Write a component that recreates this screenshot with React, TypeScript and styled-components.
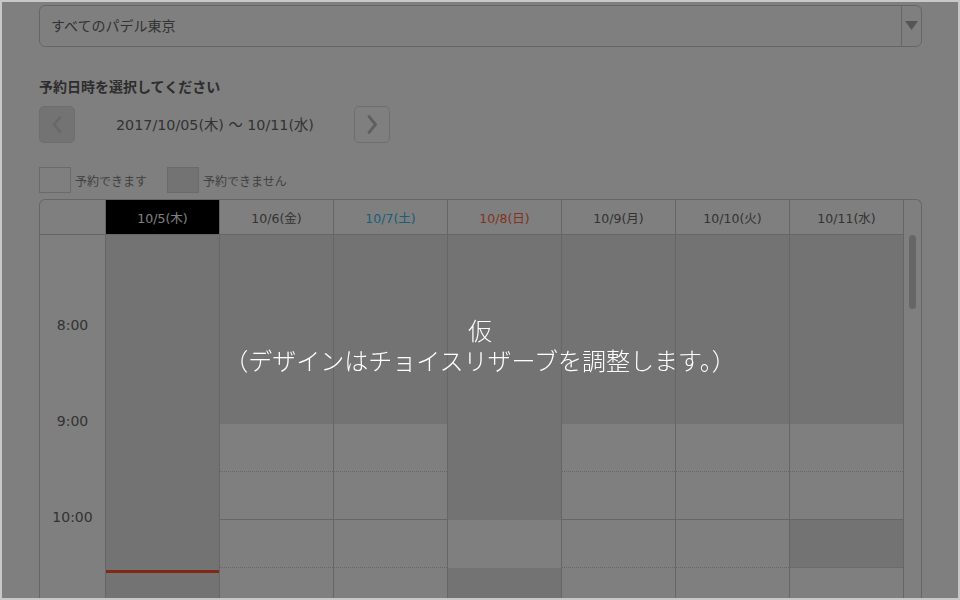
import React from "react";
import styled, { createGlobalStyle, css } from "styled-components";

const GlobalStyle = createGlobalStyle`
  html, body {
    margin: 0;
    padding: 0;
    height: 100%;
    overflow: hidden;
    background: #ffffff;
  }
  body {
    font-family: "DejaVu Sans", "Noto Sans CJK JP", sans-serif;
    color: #666666;
  }
  * { box-sizing: border-box; }
`;

const Page = styled.div`
  padding: 5px 38px 0 39px;
  display: flex;
  flex-direction: column;
`;

const Select = styled.div`
  height: 42px;
  border: 1px solid #cccccc;
  border-radius: 6px;
  display: flex;
  align-items: stretch;
  background: #ffffff;
`;

const SelectText = styled.div`
  flex: 1;
  display: flex;
  align-items: center;
  padding: 0 0 3px 11px;
  font-family: "Noto Sans CJK JP", sans-serif;
  font-size: 14px;
  color: #666666;
`;

const SelectArrow = styled.div`
  width: 20px;
  border-left: 1px solid #cccccc;
  display: flex;
  align-items: center;
  justify-content: center;
  padding: 0 1px 2px 0;
`;

const Heading = styled.h2`
  margin: 29px 0 0;
  font-family: "Noto Sans CJK JP", sans-serif;
  font-size: 14px;
  line-height: 20px;
  font-weight: 700;
  color: #5a5a5a;
`;

const NavRow = styled.div`
  margin-top: 10px;
  height: 37px;
  display: flex;
  align-items: center;
`;

const NavButton = styled.div<{ $disabled?: boolean }>`
  width: 36px;
  height: 37px;
  border-radius: 5px;
  display: flex;
  align-items: center;
  justify-content: center;
  ${(p) =>
    p.$disabled
      ? css`
          background: #e6e6e6;
          border: 1px solid #dddddd;
        `
      : css`
          background: #ffffff;
          border: 1px solid #dddddd;
        `}
`;

const RangeText = styled.div`
  padding: 0 40px 3px 41px;
  font-size: 14.3px;
  color: #666666;
  white-space: nowrap;
`;

const Legend = styled.div`
  margin-top: 24px;
  display: flex;
  align-items: center;
  gap: 20px;
`;

const LegendItem = styled.div`
  display: flex;
  align-items: center;
  gap: 4px;
`;

const LegendSwatch = styled.div<{ $full?: boolean }>`
  width: 32px;
  height: 26px;
  border: 1px solid #d4d4d4;
  background: ${(p) => (p.$full ? "#e6e6e6" : "#ffffff")};
`;

const LegendText = styled.span`
  font-family: "Noto Sans CJK JP", sans-serif;
  font-size: 12px;
  color: #808080;
`;

const Table = styled.div`
  margin-top: 6px;
  width: 883px;
  border: 1px solid #cccccc;
  border-bottom: none;
  border-radius: 6px 6px 0 0;
  display: flex;
  overflow: hidden;
  background: #ffffff;
`;

const Main = styled.div`
  width: 864px;
  display: flex;
  flex-direction: column;
`;

const HeadRow = styled.div`
  height: 35px;
  display: flex;
  border-bottom: 1px solid #cccccc;
`;

const HeadCorner = styled.div`
  width: 66px;
  border-right: 1px solid #cccccc;
`;

type Tone = "today" | "weekday" | "sat" | "sun";

const toneColor: Record<Tone, string> = {
  today: "#ffffff",
  weekday: "#666666",
  sat: "#33bbee",
  sun: "#ff6644",
};

const HeadCell = styled.div<{ $tone: Tone }>`
  width: 114px;
  border-right: 1px solid #cccccc;
  display: flex;
  align-items: center;
  justify-content: center;
  font-size: 12.5px;
  color: ${(p) => toneColor[p.$tone]};
  background: ${(p) => (p.$tone === "today" ? "#000000" : "transparent")};
`;

const BodyViewport = styled.div`
  height: 370px;
  overflow: hidden;
`;

const BodyInner = styled.div`
  display: flex;
  margin-top: -3px;
`;

const TimeCol = styled.div`
  width: 66px;
  border-right: 1px solid #cccccc;
  display: flex;
  flex-direction: column;
`;

const HourBlock = styled.div`
  height: 96px;
  display: flex;
  justify-content: center;
`;

const TimeLabel = styled.span`
  margin-top: -13px;
  height: 20px;
  line-height: 20px;
  font-size: 14px;
  color: #666666;
`;

const DayCol = styled.div`
  position: relative;
  width: 114px;
  border-right: 1px solid #cccccc;
  display: flex;
  flex-direction: column;
`;

type SlotState = "closed" | "open" | "full" | "blank";

const Slot = styled.div<{ $state: SlotState; $solid: boolean }>`
  height: 48px;
  border-bottom: 1px ${(p) => (p.$solid ? "solid" : "dotted")}
    ${(p) => (p.$state === "closed" || p.$state === "blank" ? "transparent" : "#cccccc")};
  background: ${(p) => (p.$state === "open" || p.$state === "blank" ? "#ffffff" : "#e6e6e6")};
`;

const NowLine = styled.div`
  position: absolute;
  left: 0;
  right: 0;
  height: 3px;
  background: #ff5533;
`;

const Rail = styled.div`
  width: 17px;
  padding: 35px 0 0 5px;
  display: flex;
  flex-direction: column;
`;

const Thumb = styled.div`
  width: 7px;
  height: 74px;
  border-radius: 4px;
  background: #cccccc;
`;

const Overlay = styled.div`
  position: fixed;
  inset: 0;
  background: rgba(0, 0, 0, 0.5);
  border: 2px solid #c8c8c8;
  display: flex;
  flex-direction: column;
  align-items: center;
  padding-top: 313px;
  font-family: "Noto Sans CJK JP", sans-serif;
  font-weight: 300;
  font-size: 24px;
  line-height: 30px;
  color: #ffffff;
  z-index: 10;
`;

const OverlayLine = styled.div`
  white-space: nowrap;
`;

const C = "closed" as const;
const O = "open" as const;
const F = "full" as const;
const B = "blank" as const;

const standard: SlotState[] = [C, C, C, C, O, O, O, O, O];

const days: { label: string; tone: Tone; slots: SlotState[]; now?: number }[] = [
  { label: "10/5(木)", tone: "today", slots: [C, C, C, C, C, C, C, C, C], now: 338 },
  { label: "10/6(金)", tone: "weekday", slots: standard },
  { label: "10/7(土)", tone: "sat", slots: standard },
  { label: "10/8(日)", tone: "sun", slots: [C, C, C, C, C, C, B, C, C] },
  { label: "10/9(月)", tone: "weekday", slots: standard },
  { label: "10/10(火)", tone: "weekday", slots: standard },
  { label: "10/11(水)", tone: "weekday", slots: [C, C, C, C, O, O, F, O, O] },
];

const hours = ["", "8:00", "9:00", "10:00"];

const ArrowDown = () => (
  <svg width="13" height="9" viewBox="0 0 13 9">
    <polygon points="0,0 13,0 6.5,9" fill="#aaaaaa" />
  </svg>
);

const ChevronLeft = () => (
  <svg width="10" height="17" viewBox="0 0 10 17">
    <polyline
      points="8,1.5 2,8.5 8,15.5"
      fill="none"
      stroke="#d0d0d0"
      strokeWidth="2.6"
      strokeLinecap="round"
      strokeLinejoin="round"
    />
  </svg>
);

const ChevronRight = () => (
  <svg width="10" height="19" viewBox="0 0 10 19">
    <polyline
      points="2,1.5 8.5,9.5 2,17.5"
      fill="none"
      stroke="#bfbfbf"
      strokeWidth="2.8"
      strokeLinecap="round"
      strokeLinejoin="round"
    />
  </svg>
);

export default function App() {
  return (
    <>
      <GlobalStyle />
      <Page>
        <Select>
          <SelectText>すべてのパデル東京</SelectText>
          <SelectArrow>
            <ArrowDown />
          </SelectArrow>
        </Select>

        <Heading>予約日時を選択してください</Heading>

        <NavRow>
          <NavButton $disabled>
            <ChevronLeft />
          </NavButton>
          <RangeText>2017/10/05(木) 〜 10/11(水)</RangeText>
          <NavButton>
            <ChevronRight />
          </NavButton>
        </NavRow>

        <Legend>
          <LegendItem>
            <LegendSwatch />
            <LegendText>予約できます</LegendText>
          </LegendItem>
          <LegendItem>
            <LegendSwatch $full />
            <LegendText>予約できません</LegendText>
          </LegendItem>
        </Legend>

        <Table>
          <Main>
            <HeadRow>
              <HeadCorner />
              {days.map((d) => (
                <HeadCell key={d.label} $tone={d.tone}>
                  {d.label}
                </HeadCell>
              ))}
            </HeadRow>
            <BodyViewport>
              <BodyInner>
                <TimeCol>
                  {hours.map((h, i) => (
                    <HourBlock key={i}>{h && <TimeLabel>{h}</TimeLabel>}</HourBlock>
                  ))}
                </TimeCol>
                {days.map((d) => (
                  <DayCol key={d.label}>
                    {d.slots.map((s, i) => (
                      <Slot key={i} $state={s} $solid={i % 2 === 1} />
                    ))}
                    {d.now !== undefined && <NowLine style={{ top: d.now }} />}
                  </DayCol>
                ))}
              </BodyInner>
            </BodyViewport>
          </Main>
          <Rail>
            <Thumb />
          </Rail>
        </Table>
      </Page>

      <Overlay>
        <OverlayLine>仮</OverlayLine>
        <OverlayLine>（デザインはチョイスリザーブを調整します。）</OverlayLine>
      </Overlay>
    </>
  );
}
